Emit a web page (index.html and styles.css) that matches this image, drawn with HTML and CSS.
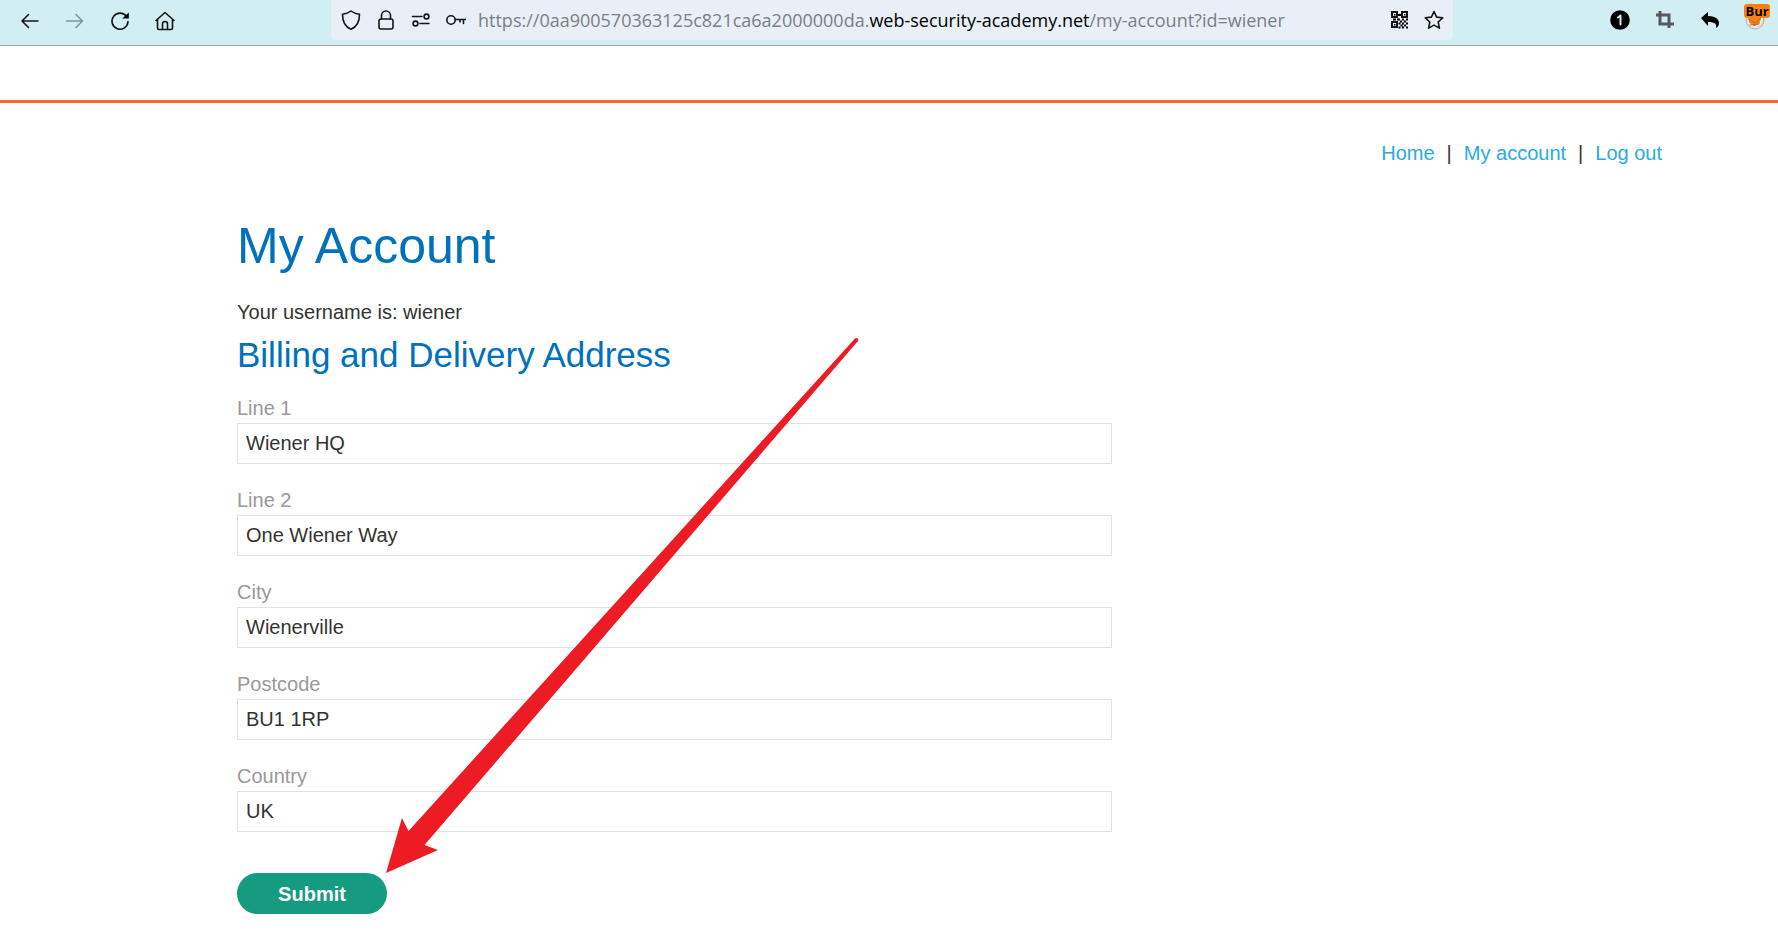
FILE: index.html
```html
<!DOCTYPE html>
<html lang="en">
<head>
<meta charset="utf-8">
<title>My Account</title>
<link rel="stylesheet" href="styles.css">
</head>
<body>
<header class="toolbar">
  <div class="nav-buttons">
    <button class="icon-btn" type="button" aria-label="Back"><svg viewBox="0 0 20 20"><path d="M18 10H2M8.500 3.500L2 10l6.500 6.500"/></svg></button>
    <button class="icon-btn faded" type="button" aria-label="Forward"><svg viewBox="0 0 20 20"><path d="M1.500 10h16M11 3.500l6.500 6.500-6.500 6.500"/></svg></button>
    <button class="icon-btn" type="button" aria-label="Reload"><svg viewBox="0 0 20 20"><path d="M16.500 5.500A8 8 0 1 0 18 10.500"/><path class="solid thin" d="M18.800 1.500V7.500h-6.500z"/></svg></button>
    <button class="icon-btn" type="button" aria-label="Home page"><svg viewBox="0 0 20 20"><path d="M1 9.500L10 1.500l9 8M2.500 8.500V17a1.500 1.500 0 0 0 1.500 1.500h12a1.500 1.500 0 0 0 1.500-1.500V8.500M7.500 18.500V13a2.500 2.500 0 0 1 5 0v5.500"/></svg></button>
  </div>
  <div class="address">
    <svg class="icon" viewBox="0 0 20 20"><path d="M10 1c2.500 2 5 2.800 8.500 3.300C18.500 11.500 16 17 10 19.200 4 17 1.500 11.500 1.500 4.300 5 3.800 7.500 3 10 1z"/></svg>
    <svg class="icon" viewBox="0 0 20 20"><rect x="3" y="9" width="14" height="10" rx="2"/><path d="M5.500 9V5.500a4.500 4.500 0 0 1 9 0V9"/></svg>
    <svg class="icon" viewBox="0 0 20 20"><path d="M1.500 6.500h9.500M9 13.500h9"/><circle cx="15.500" cy="6.500" r="2.400"/><circle cx="4.500" cy="13.500" r="2.400"/></svg>
    <svg class="icon" viewBox="0 0 20 20"><circle cx="5" cy="10" r="4.200"/><path d="M9.200 9.500H19.500M17.500 9.500v4M14 9.500v2.500"/></svg>
    <div class="url">https://0aa900570363125c821ca6a2000000da.<span class="domain">web-security-academy.net</span>/my-account?id=wiener</div>
    <svg class="icon" viewBox="0 0 20 20"><path class="square" d="M3 2h5v5H3zM13 2h5v5h-5zM3 12h5v5H3z"/><path class="solid thin" d="M5 4h1.500v1.500H5zM15 4h1.500v1.500H15zM5 14h1.500v1.500H5zM9 4h3v2H9zM4 8.500h3v2H4zM8 8.500h3v2H8zM13 8.500h2v2h-2zM17 8.500h2v2h-2zM11 10.500h2v2h-2zM15 10.500h2v2h-2zM9.500 12.500h2v2h-2zM13 12.500h2v2h-2zM17 12.500h2v2h-2zM11.500 14.500h2v2h-2zM15 14.500h2v2h-2zM9.500 16.500h2v2h-2zM13 16.500h2v2h-2zM17 16.500h2v2h-2z"/></svg>
    <svg class="icon" viewBox="0 0 20 20"><path d="M10 1.500l2.600 5.600 6.100.7-4.500 4.200 1.200 6.100-5.400-3-5.400 3 1.200-6.100L1.300 7.800l6.100-.7z"/></svg>
  </div>
  <div class="extensions">
    <svg class="icon" viewBox="0 0 20 20"><circle class="solid thin" cx="10" cy="10" r="9.800"/><path class="numeral" d="M8 7.500L10.500 5.500V14.500"/></svg>
    <svg class="icon crop" viewBox="0 0 20 20"><path d="M5 1v13h14M1 5h13v13"/></svg>
    <svg class="icon" viewBox="0 0 20 20"><path class="solid thin" d="M1 8l7-6v4c7 0 11 3 11 7 0 2-1 4-3 5 1-4-1-6-8-6v4z"/></svg>
    <div class="burp">
      <svg class="icon" viewBox="0 0 20 20"><circle cx="10" cy="10" r="9" fill="#e9e2d8" stroke="#b8b0a8"/><path d="M3 7l6-1 8 1-2 7-6 3-5-4z" fill="#f58220" stroke="#fff"/><path d="M3 9l7 4 6-5M5 15l9-1" stroke="#b8683c" fill="none"/></svg>
      <span class="badge">Bur</span>
    </div>
  </div>
</header>
<div class="banner"></div>
<main class="page">
  <nav class="links"><a href="#">Home</a><span>|</span><a href="#">My account</a><span>|</span><a href="#">Log out</a></nav>
  <div class="content">
    <h1>My Account</h1>
    <p class="username">Your username is: wiener</p>
    <h2>Billing and Delivery Address</h2>
    <form class="form">
      <div class="field"><label for="line1">Line 1</label><input id="line1" type="text" value="Wiener HQ"></div>
      <div class="field"><label for="line2">Line 2</label><input id="line2" type="text" value="One Wiener Way"></div>
      <div class="field"><label for="city">City</label><input id="city" type="text" value="Wienerville"></div>
      <div class="field"><label for="postcode">Postcode</label><input id="postcode" type="text" value="BU1 1RP"></div>
      <div class="field"><label for="country">Country</label><input id="country" type="text" value="UK"></div>
      <div class="actions">
        <button class="submit" type="button">Submit</button>
        <svg class="arrow" viewBox="0 0 474 536"><path d="M0 536L16 481L22.500 494L468.500 2A2 2 0 0 1 472 4L38.500 508L52 513Z"/></svg>
      </div>
    </form>
  </div>
</main>
</body>
</html>
```
FILE: styles.css
```css
* { box-sizing: border-box; }
body {
  margin: 0;
  background: #fff;
  color: #333332;
  font: 20px/24px "Liberation Sans", Arial, sans-serif;
}
.toolbar {
  display: grid;
  grid-template-columns: 331fr 1122fr 325fr;
  height: 46px;
  background: #d1eef2;
  border-bottom: 1px solid #97a9ac;
}
.nav-buttons {
  display: flex;
  gap: 25px;
  padding: 11px 0 0 20px;
}
.icon-btn {
  width: 20px;
  height: 20px;
  padding: 0;
  border: 0;
  background: none;
}
.icon-btn svg, .icon {
  display: block;
  flex: none;
  width: 20px;
  height: 20px;
  fill: none;
  stroke: #151515;
  stroke-width: 1.6;
  stroke-linejoin: round;
  stroke-linecap: round;
}
.faded { opacity: .4; }
.icon-btn .solid, .icon .solid { fill: #000; }
.thin { stroke: none; }
.square { stroke-linejoin: miter; stroke-width: 2; }
.address {
  display: flex;
  align-items: center;
  gap: 15px;
  height: 40px;
  padding: 0 9px 0 10px;
  background: #e8eff6;
  border-radius: 0 0 5px 5px;
}
.url {
  flex: 1;
  margin-left: -3px;
  color: #7b7f83;
  font: 18px/24px "Open Sans", "Noto Sans", sans-serif;
  white-space: nowrap;
}
.domain { color: #000; }
.extensions {
  display: flex;
  justify-content: flex-end;
  gap: 25px;
  padding: 10px 13px 0 0;
}
.numeral { stroke: #d1eef2; stroke-width: 2; }
.icon.crop {
  stroke: #55595e;
  stroke-width: 3;
  stroke-linecap: butt;
  stroke-linejoin: miter;
}
.burp { position: relative; }
.burp .icon { stroke-width: 1; }
.badge {
  position: absolute;
  top: -6px;
  left: -1px;
  width: 26px;
  border-radius: 3px;
  background: #ff7f0e;
  color: #000;
  font: bold 13px/14px "Open Sans", sans-serif;
  text-align: center;
}
.banner {
  height: 57px;
  border-bottom: 3px solid #ff6633;
}
.page { padding: 38px 116px 0 237px; }
.links {
  display: flex;
  justify-content: flex-end;
  gap: 12px;
}
.links a { color: #29abe2; text-decoration: none; }
h1, h2 { margin: 0; color: #0071bc; font-weight: normal; }
h1 { margin-top: 52px; font-size: 50px; line-height: 58px; }
.username { margin: 25px 0 10px; }
h2 { font-size: 35px; line-height: 42px; }
.form {
  display: grid;
  gap: 25px;
  max-width: 875px;
  margin-top: 21px;
}
.field { display: grid; gap: 3px; }
label { color: #999; line-height: 23px; }
.field input {
  width: 100%;
  height: 41px;
  padding: 0 8px;
  border: 1px solid #e2e2e2;
  background: transparent;
  color: #333332;
  font: inherit;
}
.actions {
  position: relative;
  padding-top: 16px;
}
.submit {
  display: block;
  width: 150px;
  height: 41px;
  border: 0;
  border-radius: 21px;
  background: #159b80;
  color: #fff;
  font: bold 20px/24px "Liberation Sans", Arial, sans-serif;
}
.arrow {
  position: absolute;
  left: 149px;
  bottom: 41px;
  width: 474px;
  height: 536px;
  fill: #ed1c24;
  pointer-events: none;
}
```
